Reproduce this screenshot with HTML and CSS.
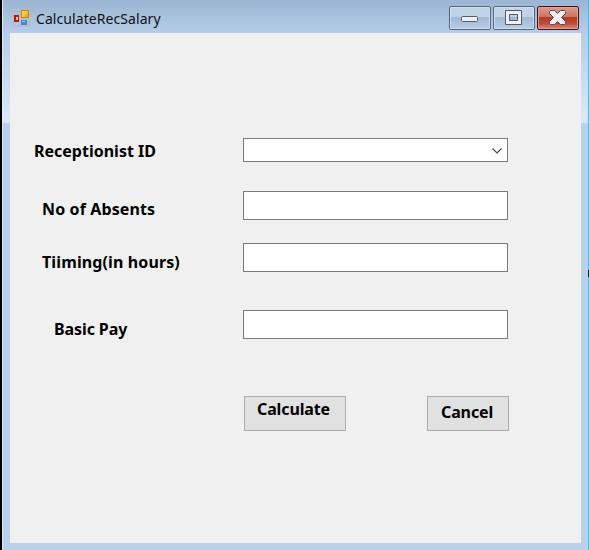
FILE: index.html
```html
<!DOCTYPE html>
<html lang="en">
<head>
<meta charset="utf-8">
<title>CalculateRecSalary</title>
<link rel="stylesheet" href="styles.css">
</head>
<body>
<div class="window">
  <header class="titlebar">
    <svg class="app-icon" width="17" height="18" viewBox="0 0 17 18">
      <defs>
        <linearGradient id="gold" x2="1" y2="1"><stop stop-color="#ffe680"/><stop offset="1" stop-color="#e3a000"/></linearGradient>
      </defs>
      <path d="M.5.5h16v17H.5zM.5 12.500h16M6.500.5v17" fill="none" stroke="#b9bdc2"/>
      <rect x="1" y="6" width="5" height="7" fill="#b81a10"/>
      <rect x="3" y="8" width="2" height="3" fill="#ffc4b8"/>
      <rect x="8.500" y="1.500" width="7" height="7" fill="url(#gold)" stroke="#c58a00"/>
      <rect x="8" y="11" width="6" height="5" fill="#4b80dc"/>
      <rect x="9" y="12" width="3" height="1" fill="#a0c2ff"/>
    </svg>
    <h1 class="title">CalculateRecSalary</h1>
    <div class="controls">
      <button class="control" aria-label="Minimize"><svg width="42" height="24" viewBox="0 0 42 24"><rect x="12.500" y="10.500" width="16" height="5" rx="1" fill="#f0f0f0" stroke="#535a70"/></svg></button>
      <button class="control" aria-label="Maximize"><svg width="42" height="24" viewBox="0 0 42 24"><path d="M12.500 4.500h16v14h-16zM16.500 8.500v6h8v-6z" fill="#f0f0f0" fill-rule="evenodd" stroke="#535a70"/></svg></button>
      <button class="control close" aria-label="Close"><svg width="42" height="24" viewBox="0 0 42 24"><path d="M13.500 4.500h4l3 3 3-3h4l1 1v2l-4 4 4 4v2l-1 1h-4l-3-3-3 3h-4l-1-1v-2l4-4-4-4v-2z" fill="#f0f0f0" stroke="#5a4858" stroke-linejoin="round"/></svg></button>
    </div>
  </header>
  <main class="client">
    <form class="fields">
      <label class="label id-label">Receptionist ID</label>
      <div class="field combo"><svg width="10" height="6" viewBox="0 0 10 6"><path d="M.5.5 5 5 9.500.5" fill="none" stroke="#444" stroke-width="1.100"/></svg></div>
      <label class="label absents-label">No of Absents</label>
      <input class="field">
      <label class="label timing-label">Tiiming(in hours)</label>
      <input class="field">
      <label class="label pay-label">Basic Pay</label>
      <input class="field">
    </form>
    <div class="actions">
      <button class="action calculate">Calculate</button>
      <button class="action cancel">Cancel</button>
    </div>
  </main>
  <div class="edge-mark"></div>
</div>
</body>
</html>
```
FILE: styles.css
```css
* { box-sizing: border-box; }
body { margin: 0; width: 589px; height: 550px; overflow: hidden; }
button, input { margin: 0; padding: 0; font: inherit; }
.window {
  position: relative;
  height: 550px;
  padding: 0 7px 7px 8px;
  border-left: 2px solid #000;
  border-right: 1px solid #42c0e2;
  background: linear-gradient(#9bb5d2, #b5cde8 33px, #dce9f7 122px, #b9d1ea 124px);
  box-shadow: inset 1px 0 #dce8f4;
}
.titlebar { display: flex; height: 33px; padding: 0 2px 0 3px; align-items: flex-start; }
.app-icon { margin-top: 9px; }
.title {
  flex: 1;
  margin: 8px 0 0 6px;
  font: 400 14px/22px "Noto Sans", sans-serif;
  letter-spacing: 0.07px;
  color: #111;
}
.controls { display: flex; gap: 2px; margin-top: 6px; }
.control {
  width: 42px;
  height: 24px;
  border: 1px solid #56677e;
  border-radius: 2px;
  background: linear-gradient(#c1d3e7 0 45%, #9eb8d3 46%, #b9cee6);
  box-shadow: inset 0 0 0 1px #cfdeed;
}
.control svg { display: block; margin: -1px; }
.close {
  border-color: #43141b;
  background: linear-gradient(#dc9b8c, #cc7664 45%, #b43c27 46%, #bd4d35 75%, #d78e7c);
  box-shadow: inset 0 0 0 1px #dda093;
}
.client { height: 510px; padding: 105px 73px 0 24px; background: #f0f0f0; }
.fields {
  display: grid;
  grid-template-columns: 209px 265px;
  grid-template-rows: 53px 52px 67px 29px;
  align-items: start;
}
.label, .action { font: 700 16px/22px "Noto Sans", sans-serif; color: #000; white-space: nowrap; }
.id-label { padding-top: 2px; letter-spacing: 0; }
.absents-label { padding: 7px 0 0 8px; letter-spacing: 0.12px; }
.timing-label { padding: 8px 0 0 8px; letter-spacing: 0.12px; }
.pay-label { padding: 8px 0 0 20px; letter-spacing: -0.1px; }
.field { display: block; width: 265px; height: 29px; border: 1px solid #7a7a7a; border-radius: 0; background: #fff; }
.combo { display: flex; height: 24px; align-items: center; justify-content: flex-end; padding: 1px 5px 0 0; }
.actions { display: flex; justify-content: space-between; margin: 57px -1px 0 210px; }
.action { display: flex; height: 35px; border: 1px solid #adadad; background: #e1e1e1; letter-spacing: -0.12px; }
.calculate { width: 102px; padding: 1px 0 0 12px; }
.cancel { width: 82px; padding: 4px 0 0 13px; }
.edge-mark { position: absolute; right: -1px; top: 270px; width: 1px; height: 7px; background: #101820; }
```
